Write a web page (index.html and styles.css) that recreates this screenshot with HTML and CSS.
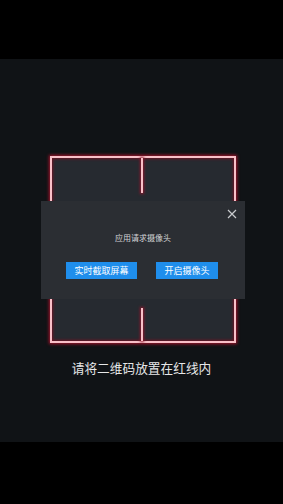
FILE: index.html
```html
<!DOCTYPE html>
<html lang="zh">
<head>
<meta charset="utf-8">
<link rel="stylesheet" href="styles.css">
</head>
<body>
<div class="screen">
  <div class="topbar"></div>
  <div class="panel">
    <div class="frame">
      <span class="tick tick-top"></span>
      <span class="tick tick-bottom"></span>
    </div>
    <p class="hint">请将二维码放置在红线内</p>
  </div>
  <div class="bottombar"></div>
  <div class="dialog">
    <button class="close" aria-label="关闭">
      <svg width="10" height="10" viewBox="0 0 10 10"><path d="M1 1L9 9M9 1L1 9" stroke="#c9cbce" stroke-width="1.2" fill="none"/></svg>
    </button>
    <div class="title">应用请求摄像头</div>
    <div class="actions">
      <button class="btn btn-wide">实时截取屏幕</button>
      <button class="btn">开启摄像头</button>
    </div>
  </div>
</div>
</body>
</html>
```
FILE: styles.css
```css
* { box-sizing: border-box; }
html, body { margin: 0; padding: 0; background: #000; }
body { font-family: "Noto Sans CJK SC", "Noto Sans", sans-serif; }
.screen { position: relative; width: 283px; height: 504px; display: flex; flex-direction: column; }
.topbar { height: 59px; background: #000; }
.panel { height: 383px; background: #101316; padding-top: 97px; display: flex; flex-direction: column; }
.bottombar { flex: 1; background: #000; }
.frame {
  position: relative;
  margin-left: 50px;
  width: 186px;
  height: 187px;
  background: #262a30;
  border: 2px solid #f8c0c8;
  box-shadow: 0 0 3px 1px #a3142c, inset 0 0 3px 1px #6e1424;
}
.tick {
  position: absolute;
  left: 89px;
  width: 2px;
  background: #f8c0c8;
  box-shadow: 0 0 3px 1px #8c162c;
}
.tick-top { top: 0; height: 35px; }
.tick-bottom { bottom: 0; height: 33px; }
.hint {
  margin: 16px 0 0;
  text-align: center;
  color: #e6e7e8;
  font-size: 12.7px;
  line-height: 18px;
}
.dialog {
  position: absolute;
  left: 41px;
  top: 201px;
  width: 204px;
  height: 98px;
  background: #2b2e33;
  display: flex;
  flex-direction: column;
  align-items: center;
}
.close {
  position: absolute;
  right: 8px;
  top: 8px;
  width: 10px;
  height: 10px;
  padding: 0;
  border: 0;
  background: none;
  display: flex;
}
.title {
  margin-top: 32px;
  font-size: 8px;
  line-height: 10px;
  color: #d2d3d5;
}
.actions { margin-top: 19px; display: flex; gap: 19px; margin-left: -2px; }
.btn {
  height: 17px;
  width: 62px;
  padding: 0;
  border: 0;
  background: #1f8eec;
  color: #fff;
  font-family: inherit;
  font-size: 9px;
  line-height: 17px;
}
.btn-wide { width: 71px; }
```
